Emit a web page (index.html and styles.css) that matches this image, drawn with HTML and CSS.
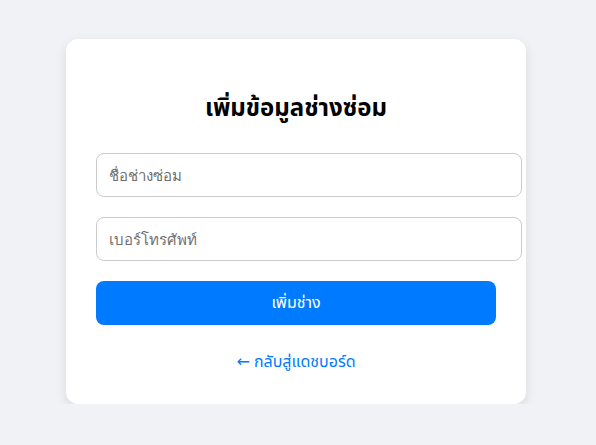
FILE: index.html
```html
<!DOCTYPE html>
<html lang="th">
<head>
  <meta charset="UTF-8">
  <meta name="viewport" content="width=device-width, initial-scale=1.0">
  <title>เพิ่มข้อมูลช่างซ่อม</title>
  <link rel="stylesheet" href="styles.css">
</head>
<body>

  <div class="container">
    <h2>เพิ่มข้อมูลช่างซ่อม</h2>
    <form id="technicianForm">
      <input type="text" id="techName" placeholder="ชื่อช่างซ่อม">
      <input type="text" id="techPhone" placeholder="เบอร์โทรศัพท์">
      <button type="submit">เพิ่มช่าง</button>
    </form>
    <a href="#" class="backLink"><span class="arrow">←</span> กลับสู่แดชบอร์ด</a>
  </div>

</body>
</html>
```

FILE: styles.css
```css
body {
  font-family: "Noto Sans Thai", "Noto Sans Thai UI", "Noto Sans", sans-serif;
  background-color: #f0f2f5;
  margin: 0;
  padding: 39px 4px 0 0;
}

.container {
  width: 400px;
  margin: 0 auto;
  background-color: #fff;
  padding: 30px;
  border-radius: 12px;
  box-shadow: 0 4px 12px rgba(0, 0, 0, 0.1);
}

h2 {
  text-align: center;
  font-size: 24px;
  margin: 22px 0 26px;
}

input {
  display: block;
  box-sizing: border-box;
  width: calc(100% + 26px);
  height: 44px;
  padding: 0 12px;
  font-size: 15px;
  border: 1px solid #ccc;
  border-radius: 8px;
  margin-bottom: 20px;
}

input::placeholder {
  color: #6f6f6f;
}

button {
  width: 100%;
  height: 44px;
  padding: 0;
  background-color: #007bff;
  color: white;
  border: none;
  border-radius: 8px;
  font-family: inherit;
  font-size: 16px;
  cursor: pointer;
  display: block;
}

.backLink {
  display: block;
  text-align: center;
  margin-top: 25px;
  color: #007bff;
  text-decoration: none;
  font-size: 16px;
}

.arrow {
  font-family: "DejaVu Sans", sans-serif;
}
```
